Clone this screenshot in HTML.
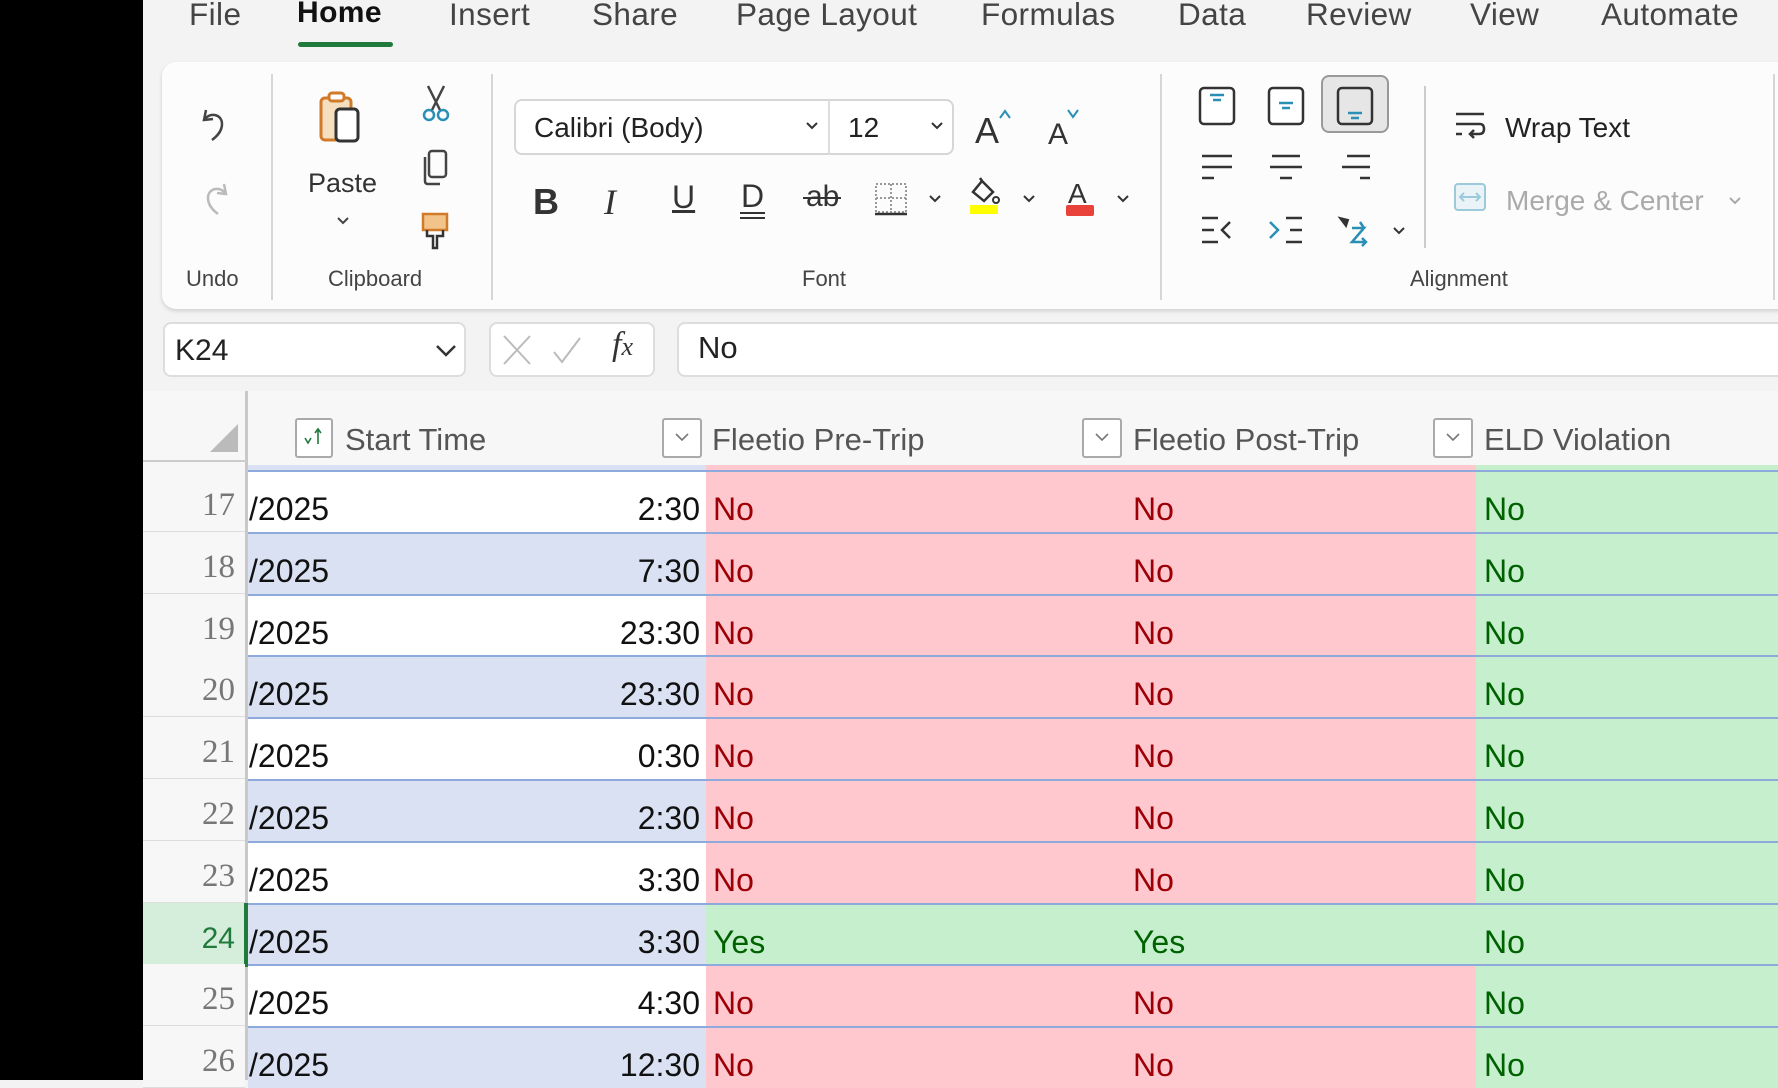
<!DOCTYPE html>
<html><head><meta charset="utf-8">
<style>
*{margin:0;padding:0;box-sizing:border-box}
body{width:1778px;height:1080px;overflow:hidden;background:#f3f3f3;font-family:"Liberation Sans",sans-serif;position:relative;color:#242424}
.a{position:absolute;white-space:nowrap}
.tab{position:absolute;top:-4px;font-size:31.5px;color:#444;letter-spacing:0.4px}
.lbl{position:absolute;top:266px;font-size:22px;color:#444}
.sep{position:absolute;width:2px;background:#d6d6d6}
svg{position:absolute;overflow:visible}
.row{position:absolute;left:143px;width:1635px;height:62px}
.rn{position:absolute;left:0;width:92px;text-align:right;font-family:"Liberation Serif",serif;font-size:33px;color:#777;top:17px}
.c{position:absolute;font-size:32px;top:21px}
</style></head><body>
<div class="a" style="left:0;top:0;width:143px;height:1080px;background:#000"></div>

<div class="tab" style="left:189px">File</div>
<div class="tab" style="left:297px;color:#111;font-weight:bold;font-size:30px">Home</div>
<div class="a" style="left:298px;top:42px;width:95px;height:5px;border-radius:3px;background:#1f7a3c"></div>
<div class="tab" style="left:449px">Insert</div>
<div class="tab" style="left:592px">Share</div>
<div class="tab" style="left:736px">Page Layout</div>
<div class="tab" style="left:981px">Formulas</div>
<div class="tab" style="left:1178px">Data</div>
<div class="tab" style="left:1306px">Review</div>
<div class="tab" style="left:1470px">View</div>
<div class="tab" style="left:1601px">Automate</div>

<div class="a" style="left:162px;top:62px;width:1640px;height:247px;background:#fcfcfc;border-radius:14px;box-shadow:0 2px 4px rgba(0,0,0,.15)"></div>

<!-- Undo -->
<svg style="left:200px;top:108px" width="30" height="34" viewBox="0 0 30 34"><path d="M6 2 L4 12 L13 11 M5 11 C10 4 22 6 22 16 C22 24 16 29 12 32" fill="none" stroke="#444" stroke-width="2.5"/></svg>
<svg style="left:200px;top:182px" width="30" height="34" viewBox="0 0 30 34"><path d="M24 2 L26 12 L17 11 M25 11 C20 4 8 6 8 16 C8 24 14 29 18 32" fill="none" stroke="#bbb" stroke-width="2.5"/></svg>
<div class="lbl" style="left:186px">Undo</div>
<div class="sep" style="left:271px;top:74px;height:226px"></div>

<!-- Clipboard -->
<svg style="left:318px;top:92px" width="48" height="52" viewBox="0 0 48 52"><rect x="3" y="6" width="30" height="42" rx="4" fill="#f6dfbf" stroke="#d07a2a" stroke-width="3"/><rect x="11" y="1" width="15" height="8" rx="3" fill="#fff" stroke="#d07a2a" stroke-width="3"/><rect x="18" y="17" width="22" height="32" rx="4" fill="#fff" stroke="#333" stroke-width="3"/></svg>
<div class="a" style="left:308px;top:168px;font-size:27px;color:#333">Paste</div>
<svg style="left:336px;top:216px" width="14" height="10"><path d="M2 2 L7 7 L12 2" fill="none" stroke="#444" stroke-width="2"/></svg>
<svg style="left:420px;top:84px" width="32" height="40" viewBox="0 0 32 40"><path d="M8 2 L20 26 M24 2 L12 26" stroke="#444" stroke-width="2.5"/><circle cx="9" cy="31" r="5" fill="none" stroke="#2a8fb5" stroke-width="2.5"/><circle cx="23" cy="31" r="5" fill="none" stroke="#2a8fb5" stroke-width="2.5"/></svg>
<svg style="left:420px;top:149px" width="30" height="40" viewBox="0 0 30 40"><rect x="9" y="2" width="17" height="26" rx="3" fill="none" stroke="#444" stroke-width="2.5"/><path d="M5 8 V32 Q5 35 8 35 H20" fill="none" stroke="#444" stroke-width="2.5"/></svg>
<svg style="left:421px;top:212px" width="30" height="40" viewBox="0 0 30 40"><rect x="2" y="2" width="24" height="16" fill="#f3c48a" stroke="#d07a2a" stroke-width="2.5"/><path d="M6 18 V24 H12 V36 H16 V24 H22 V18" fill="none" stroke="#333" stroke-width="2.5"/></svg>
<div class="lbl" style="left:328px">Clipboard</div>
<div class="sep" style="left:491px;top:74px;height:226px"></div>

<!-- Font -->
<div class="a" style="left:514px;top:99px;width:440px;height:56px;border:2px solid #d6d6d6;border-radius:8px;background:#fff"></div>
<div class="a" style="left:828px;top:100px;width:2px;height:54px;background:#ddd"></div>
<div class="a" style="left:534px;top:112px;font-size:28px;color:#222">Calibri (Body)</div>
<svg style="left:805px;top:121px" width="14" height="10"><path d="M2 2 L7 7 L12 2" fill="none" stroke="#333" stroke-width="2"/></svg>
<div class="a" style="left:848px;top:112px;font-size:28px;color:#222">12</div>
<svg style="left:930px;top:121px" width="14" height="10"><path d="M2 2 L7 7 L12 2" fill="none" stroke="#333" stroke-width="2"/></svg>
<div class="a" style="left:975px;top:110px;font-size:36px;color:#333">A</div>
<svg style="left:998px;top:108px" width="14" height="12"><path d="M2 10 L7 3 L12 10" fill="none" stroke="#2a8fb5" stroke-width="2"/></svg>
<div class="a" style="left:1048px;top:118px;font-size:30px;color:#333">A</div>
<svg style="left:1066px;top:108px" width="14" height="12"><path d="M2 2 L7 9 L12 2" fill="none" stroke="#2a8fb5" stroke-width="2"/></svg>

<div class="a" style="left:533px;top:181px;font-size:36px;font-weight:bold;color:#333">B</div>
<div class="a" style="left:604px;top:181px;font-size:36px;font-style:italic;font-family:'Liberation Serif',serif;color:#333">I</div>
<div class="a" style="left:672px;top:179px;font-size:32px;color:#333;text-decoration:underline">U</div>
<div class="a" style="left:741px;top:178px;font-size:32px;color:#333">D</div>
<div class="a" style="left:740px;top:212px;width:25px;height:2px;background:#333;box-shadow:0 5px 0 #333"></div>
<div class="a" style="left:806px;top:180px;font-size:30px;color:#333">ab</div>
<div class="a" style="left:803px;top:197px;width:38px;height:2px;background:#333"></div>
<svg style="left:874px;top:182px" width="34" height="36" viewBox="0 0 34 36"><rect x="2" y="2" width="30" height="28" fill="none" stroke="#999" stroke-width="2" stroke-dasharray="2 2"/><path d="M17 2 V30 M2 16 H32" stroke="#999" stroke-width="2" stroke-dasharray="2 2"/><path d="M1 32 H33" stroke="#333" stroke-width="2.5"/></svg>
<svg style="left:928px;top:194px" width="14" height="10"><path d="M2 2 L7 7 L12 2" fill="none" stroke="#333" stroke-width="2"/></svg>
<svg style="left:968px;top:178px" width="34" height="38" viewBox="0 0 34 38"><path d="M14 3 L25 14 L16 23 L5 14 Z M14 3 L12 0" fill="none" stroke="#333" stroke-width="2.5"/><circle cx="28" cy="22" r="3" fill="none" stroke="#333" stroke-width="2"/><rect x="2" y="27" width="28" height="9" fill="#ffff00"/></svg>
<svg style="left:1022px;top:194px" width="14" height="10"><path d="M2 2 L7 7 L12 2" fill="none" stroke="#333" stroke-width="2"/></svg>
<div class="a" style="left:1068px;top:178px;font-size:28px;color:#333">A</div>
<div class="a" style="left:1066px;top:205px;width:28px;height:11px;background:#e8423a;border-radius:2px"></div>
<svg style="left:1116px;top:194px" width="14" height="10"><path d="M2 2 L7 7 L12 2" fill="none" stroke="#333" stroke-width="2"/></svg>
<div class="lbl" style="left:802px">Font</div>
<div class="sep" style="left:1160px;top:74px;height:226px"></div>

<!-- Alignment -->
<div class="a" style="left:1321px;top:75px;width:68px;height:58px;border:2px solid #999;border-radius:8px;background:#e6e6e6"></div>
<svg style="left:1198px;top:86px" width="240" height="40" viewBox="0 0 240 40">
<rect x="2" y="2" width="34" height="36" rx="4" fill="#fff" stroke="#333" stroke-width="2.5"/><path d="M12 9 H26 M15 14 H23" stroke="#2a8fb5" stroke-width="2.5"/>
<rect x="71" y="2" width="34" height="36" rx="4" fill="#fff" stroke="#333" stroke-width="2.5"/><path d="M81 17 H95 M84 22 H92" stroke="#2a8fb5" stroke-width="2.5"/>
<rect x="140" y="2" width="34" height="36" rx="4" fill="none" stroke="#333" stroke-width="2.5"/><path d="M150 27 H164 M153 32 H161" stroke="#2a8fb5" stroke-width="2.5"/>
</svg>
<svg style="left:1200px;top:154px" width="190" height="30" viewBox="0 0 190 30"><path d="M2 2 H32 M2 13 H32 M2 24 H14" stroke="#333" stroke-width="2.5"/><path d="M72 2 H100 M70 13 H102 M80 24 H92" stroke="#333" stroke-width="2.5"/><path d="M147 2 H170 M142 13 H170 M160 24 H170" stroke="#333" stroke-width="2.5"/></svg>
<svg style="left:1200px;top:216px" width="210" height="34" viewBox="0 0 210 34"><path d="M2 2 H18 M2 14 H14 M2 26 H18 M30 6 L22 14 L30 22" fill="none" stroke="#333" stroke-width="2.5"/><path d="M70 6 L78 14 L70 22" fill="none" stroke="#2a8fb5" stroke-width="2.5"/><path d="M86 2 H102 M90 14 H102 M86 26 H102" stroke="#333" stroke-width="2.5"/><path d="M140 2 L146 10 L148 4 Z" fill="#333" stroke="#333" stroke-width="2"/><path d="M152 12 H164 L152 26 H166 M162 22 L166 26 L162 30 M160 6 L164 12" fill="none" stroke="#2a8fb5" stroke-width="2.5"/><path d="M194 12 L199 17 L204 12" fill="none" stroke="#333" stroke-width="2"/></svg>
<div class="sep" style="left:1424px;top:86px;height:162px;background:#ccc"></div>
<svg style="left:1454px;top:112px" width="32" height="32" viewBox="0 0 32 32"><path d="M2 2 H30 M2 12 H26 Q30 12 30 17 Q30 22 25 22 H16 M20 18 L16 22 L20 26 M2 22 H8" fill="none" stroke="#333" stroke-width="2.5"/></svg>
<div class="a" style="left:1505px;top:112px;font-size:28px;color:#222">Wrap Text</div>
<svg style="left:1453px;top:182px" width="34" height="30" viewBox="0 0 34 30"><rect x="2" y="2" width="30" height="26" rx="3" fill="#eaf4f8" stroke="#9ccadb" stroke-width="2"/><path d="M8 15 H26 M11 11 L7 15 L11 19 M23 11 L27 15 L23 19" fill="none" stroke="#9ccadb" stroke-width="2"/></svg>
<div class="a" style="left:1506px;top:185px;font-size:28px;color:#aaa">Merge &amp; Center</div>
<svg style="left:1728px;top:196px" width="14" height="10"><path d="M2 2 L7 7 L12 2" fill="none" stroke="#aaa" stroke-width="2"/></svg>
<div class="lbl" style="left:1410px">Alignment</div>
<div class="sep" style="left:1773px;top:74px;height:226px"></div>

<!-- Formula bar -->
<div class="a" style="left:163px;top:322px;width:303px;height:55px;border:2px solid #ddd;border-radius:8px;background:#fff"></div>
<div class="a" style="left:175px;top:334px;font-size:30px;color:#222">K24</div>
<svg style="left:435px;top:344px" width="22" height="14"><path d="M2 2 L11 11 L20 2" fill="none" stroke="#333" stroke-width="2.5"/></svg>
<div class="a" style="left:489px;top:322px;width:166px;height:55px;border:2px solid #ddd;border-radius:8px;background:#fff"></div>
<svg style="left:502px;top:334px" width="130" height="32" viewBox="0 0 130 32"><path d="M2 2 L28 30 M28 2 L2 30" stroke="#bbb" stroke-width="2"/><path d="M52 18 L60 28 L78 4" fill="none" stroke="#bbb" stroke-width="2"/></svg>
<div class="a" style="left:612px;top:326px;font-size:34px;font-style:italic;font-family:'Liberation Serif',serif;color:#333">f<span style="font-size:26px">x</span></div>
<div class="a" style="left:677px;top:322px;width:1120px;height:55px;border:2px solid #ddd;border-radius:8px;background:#fff"></div>
<div class="a" style="left:698px;top:330px;font-size:31px;color:#222">No</div>

<!-- Grid header -->
<div class="a" style="left:143px;top:391px;width:1635px;height:74px;background:#f7f7f7"></div>
<div class="a" style="left:245px;top:391px;width:3px;height:689px;background:#c8c8c8"></div>
<svg style="left:210px;top:424px" width="30" height="30"><path d="M28 0 V28 H0 Z" fill="#bbb"/></svg>
<div class="a" style="left:143px;top:460px;width:104px;height:2px;background:#ccc"></div>
<div class="a" style="left:295px;top:418px;width:38px;height:40px;border:2px solid #aaa;border-radius:3px;background:#fff"></div>
<svg style="left:302px;top:426px" width="24" height="24"><path d="M3 12 L6 17 L9 12 M16 4 V18 M13 7 L16 3 L19 7" fill="none" stroke="#1f7a3c" stroke-width="1.6"/></svg>
<div class="a" style="left:345px;top:422px;font-size:31px;color:#555">Start Time</div>
<div class="a" style="left:662px;top:418px;width:40px;height:40px;border:2px solid #aaa;border-radius:3px;background:#fff"></div>
<svg style="left:674px;top:432px" width="16" height="10"><path d="M2 2 L8 8 L14 2" fill="none" stroke="#777" stroke-width="1.6"/></svg>
<div class="a" style="left:712px;top:422px;font-size:31px;color:#555">Fleetio Pre-Trip</div>
<div class="a" style="left:1082px;top:418px;width:40px;height:40px;border:2px solid #aaa;border-radius:3px;background:#fff"></div>
<svg style="left:1094px;top:432px" width="16" height="10"><path d="M2 2 L8 8 L14 2" fill="none" stroke="#777" stroke-width="1.6"/></svg>
<div class="a" style="left:1133px;top:422px;font-size:31px;color:#555">Fleetio Post-Trip</div>
<div class="a" style="left:1433px;top:418px;width:40px;height:40px;border:2px solid #aaa;border-radius:3px;background:#fff"></div>
<svg style="left:1445px;top:432px" width="16" height="10"><path d="M2 2 L8 8 L14 2" fill="none" stroke="#777" stroke-width="1.6"/></svg>
<div class="a" style="left:1484px;top:422px;font-size:31px;color:#555">ELD Violation</div>

<!-- strip above row 17 -->
<div class="a" style="left:143px;top:465px;width:102px;height:615px;background:#f7f7f7"></div>
<div class="a" style="left:248px;top:465px;width:458px;height:5px;background:#d9e1f2"></div>
<div class="a" style="left:706px;top:465px;width:770px;height:5px;background:#ffc7ce"></div>
<div class="a" style="left:1476px;top:465px;width:302px;height:5px;background:#c6efce"></div>

<div id="rows"></div>
<script>
var data=[[17,"2:30",0],[18,"7:30",0],[19,"23:30",0],[20,"23:30",0],[21,"0:30",0],[22,"2:30",0],[23,"3:30",0],[24,"3:30",1],[25,"4:30",0],[26,"12:30",0]];
var h="";
data.forEach(function(d,i){
 var top=Math.round(470+61.8*i);
 var blue=(d[0]%2==0)?"#d9e1f2":"#fff";
 var sel=d[2];
 var pc=sel?"#c6efce":"#ffc7ce", pt=sel?"#006100":"#9c0006", pv=sel?"Yes":"No";
 h+='<div class="row" style="top:'+top+'px">';
 h+='<div class="a" style="left:0;top:0;width:102px;height:62px;background:'+(sel?"#d4eedb":"#f7f7f7")+';border-bottom:1px solid #ddd"></div>';
 h+='<div class="rn" style="'+(sel?"color:#1f7a3c;font-family:Liberation Sans,sans-serif;font-size:30px;top:19px":"")+'">'+d[0]+'</div>';
 h+='<div class="a" style="left:105px;top:0;width:458px;height:62px;background:'+blue+'"></div>';
 h+='<div class="a" style="left:563px;top:0;width:770px;height:62px;background:'+pc+'"></div>';
 h+='<div class="a" style="left:1333px;top:0;width:302px;height:62px;background:#c6efce"></div>';
 h+='<div class="a" style="left:105px;top:0;width:1530px;height:2px;background:#8ea9db"></div>';
 h+='<div class="c" style="left:106px;color:#111">/2025</div>';
 h+='<div class="c" style="left:400px;width:157px;text-align:right;color:#111">'+d[1]+'</div>';
 h+='<div class="c" style="left:570px;color:'+pt+'">'+pv+'</div>';
 h+='<div class="c" style="left:990px;color:'+pt+'">'+pv+'</div>';
 h+='<div class="c" style="left:1341px;color:#006100">No</div>';
 if(sel) h+='<div class="a" style="left:101px;top:0;width:4px;height:64px;background:#1f7a3c"></div>';
 h+='</div>';
});
document.getElementById("rows").innerHTML=h;
</script>
</body></html>
